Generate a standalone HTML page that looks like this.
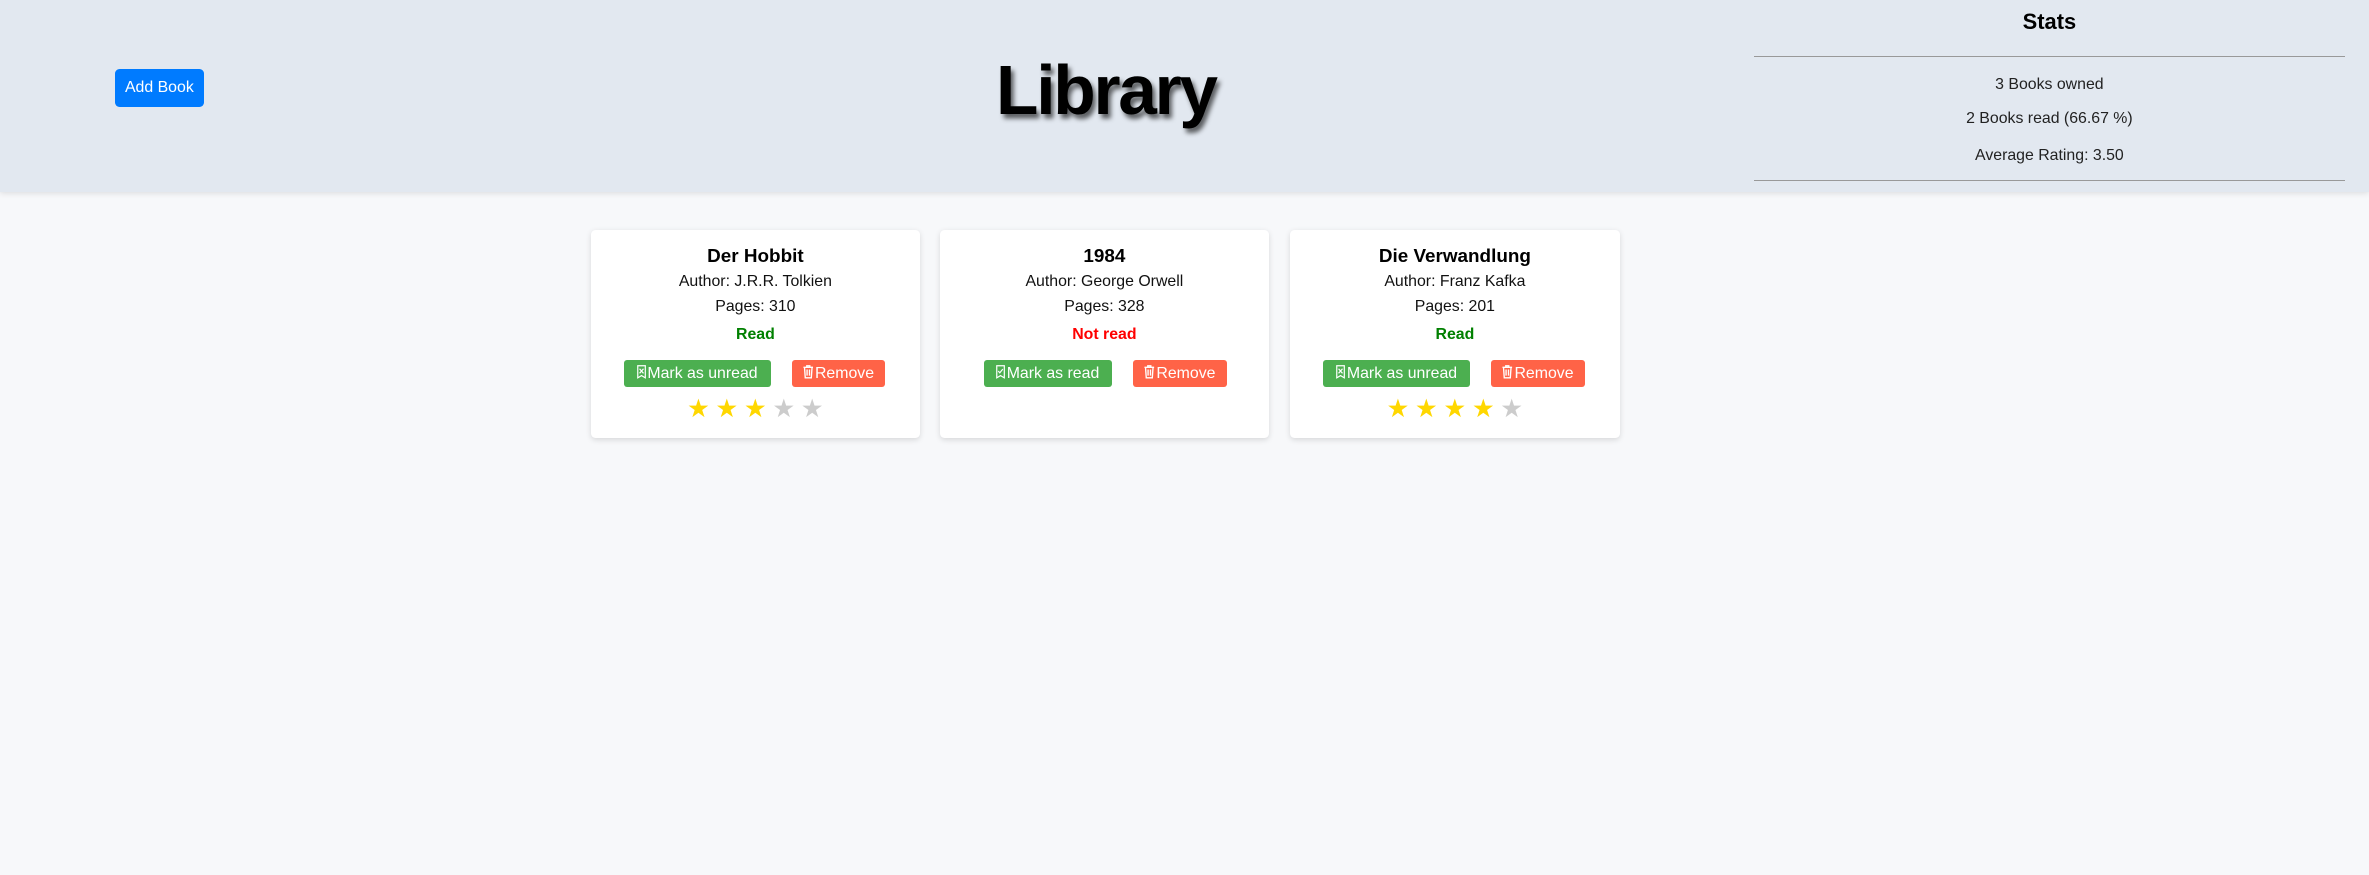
<!DOCTYPE html>
<html><head><meta charset="utf-8"><style>
html,body{margin:0;padding:0;}
body{width:2369px;height:875px;background:#f7f8fa;overflow:hidden;font-family:"Liberation Sans",Arial,sans-serif;}
#w{zoom:1.5108;width:1568px;height:579px;position:relative;}
header{position:absolute;left:0;top:0;width:1568px;height:127px;background:#e2e8f0;box-shadow:0 1px 4px rgba(0,0,0,.12);}
.add{position:absolute;left:76px;top:46px;width:59px;height:25px;background:#007bff;color:#fff;border-radius:3px;font-size:10.5px;line-height:25px;text-align:center;}
h1{position:absolute;left:0;width:1464px;top:30px;margin:0;text-align:center;font-size:46px;font-weight:bold;letter-spacing:-1.5px;text-shadow:2px 3px 3px rgba(0,0,0,.6);line-height:60px;}
.stats{position:absolute;left:1161px;top:0;width:391px;text-align:center;font-size:10.5px;color:#222;}
.stats h2{margin:0;position:absolute;top:6px;width:100%;font-size:14.5px;font-weight:bold;color:#000;}
.hr{position:absolute;left:0;width:100%;height:1px;background:#999;}
.stats p{margin:0;position:absolute;width:100%;}
.card{position:absolute;top:152px;width:218px;height:138px;background:#fff;border-radius:3px;box-shadow:0 1px 4px rgba(0,0,0,.13);text-align:center;}
.card div{position:absolute;left:0;width:100%;}
.t{font-size:12.5px;font-weight:bold;}
.s{font-size:10.5px;color:#111;}
.st{font-size:10.5px;font-weight:bold;}
.btn{position:absolute;top:86px;height:18px;line-height:18px;color:#fff;font-size:10.5px;border-radius:2px;text-align:center;}
.btn svg{vertical-align:-1px;margin-right:1px}
.g{background:#4caf50}.r{background:#ff6347}
.stars{top:110px;font-size:17px;letter-spacing:3.6px;line-height:18px;text-indent:3.6px}
.y{color:#ffd700}.n{color:#ccc}
</style></head><body><div id="w">
<header>
<div class="add">Add Book</div>
<h1>Library</h1>
<div class="stats">
<h2>Stats</h2>
<div class="hr" style="top:37px"></div>
<p style="top:50px">3 Books owned</p>
<p style="top:73px">2 Books read (66.67 %)</p>
<p style="top:97px">Average Rating: 3.50</p>
<div class="hr" style="top:119px"></div>
</div>
</header>

<div class="card" style="left:391px">
<div class="t" style="top:11px">Der Hobbit</div>
<div class="s" style="top:29px">Author: J.R.R. Tolkien</div>
<div class="s" style="top:45px">Pages: 310</div>
<div class="st" style="top:64px;color:#008000">Read</div>
<span class="btn g" style="left:22px;width:97px"><svg width="6" height="9" viewBox="0 0 6 9"><path d="M.5.5h5v8L3 7 .5 8.5z M1.7 2.5l2.6 3 M4.3 2.5l-2.6 3" fill="none" stroke="#fff" stroke-width=".8"/></svg>Mark as unread</span>
<span class="btn r" style="left:133px;width:62px"><svg width="7" height="9" viewBox="0 0 7 9"><path d="M.3 1.5h6.4M2.5 1.5V.5h2v1M1 1.5l.5 7h4l.5-7M2.7 3v4M4.3 3v4" fill="none" stroke="#fff" stroke-width=".9"/></svg>Remove</span>
<div class="stars"><span class="y">★★★</span><span class="n">★★</span></div>
</div>

<div class="card" style="left:622px">
<div class="t" style="top:11px">1984</div>
<div class="s" style="top:29px">Author: George Orwell</div>
<div class="s" style="top:45px">Pages: 328</div>
<div class="st" style="top:64px;color:#ff0000">Not read</div>
<span class="btn g" style="left:29px;width:85px"><svg width="6" height="9" viewBox="0 0 6 9"><path d="M.5.5h5v8L3 7 .5 8.5z M1.5 4l1 1.2 2-2.5" fill="none" stroke="#fff" stroke-width=".8"/></svg>Mark as read</span>
<span class="btn r" style="left:128px;width:62px"><svg width="7" height="9" viewBox="0 0 7 9"><path d="M.3 1.5h6.4M2.5 1.5V.5h2v1M1 1.5l.5 7h4l.5-7M2.7 3v4M4.3 3v4" fill="none" stroke="#fff" stroke-width=".9"/></svg>Remove</span>
</div>

<div class="card" style="left:854px">
<div class="t" style="top:11px">Die Verwandlung</div>
<div class="s" style="top:29px">Author: Franz Kafka</div>
<div class="s" style="top:45px">Pages: 201</div>
<div class="st" style="top:64px;color:#008000">Read</div>
<span class="btn g" style="left:22px;width:97px"><svg width="6" height="9" viewBox="0 0 6 9"><path d="M.5.5h5v8L3 7 .5 8.5z M1.7 2.5l2.6 3 M4.3 2.5l-2.6 3" fill="none" stroke="#fff" stroke-width=".8"/></svg>Mark as unread</span>
<span class="btn r" style="left:133px;width:62px"><svg width="7" height="9" viewBox="0 0 7 9"><path d="M.3 1.5h6.4M2.5 1.5V.5h2v1M1 1.5l.5 7h4l.5-7M2.7 3v4M4.3 3v4" fill="none" stroke="#fff" stroke-width=".9"/></svg>Remove</span>
<div class="stars"><span class="y">★★★★</span><span class="n">★</span></div>
</div>
</div></body></html>
